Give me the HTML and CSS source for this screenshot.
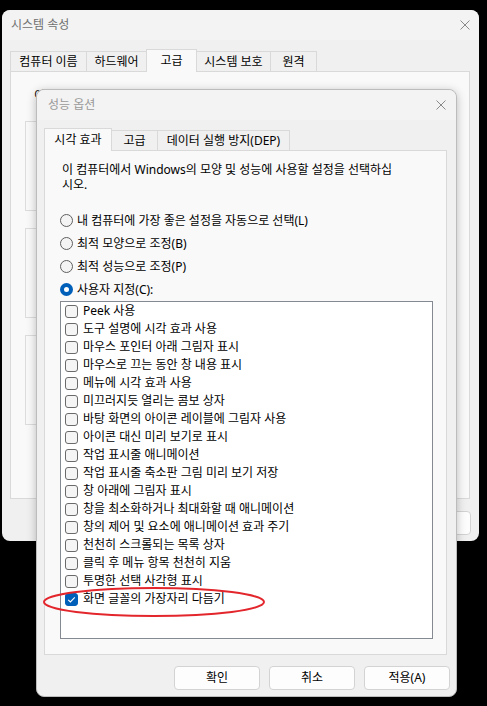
FILE: index.html
```html
<!DOCTYPE html>
<html lang="ko">
<head>
<meta charset="utf-8">
<title>성능 옵션</title>
<link rel="stylesheet" href="styles.css">
</head>
<body>
<div class="desktop">
  <section class="win win-back">
    <header class="titlebar back-title">
      <span class="title">시스템 속성</span>
      <svg class="close" width="10" height="10" viewBox="0 0 10 10"><path d="M0.5 0.5L9.5 9.5M9.5 0.5L0.5 9.5"/></svg>
    </header>
    <nav class="tabs back-tabs">
      <div class="tab bt1">컴퓨터 이름</div>
      <div class="tab bt2">하드웨어</div>
      <div class="tab sel bt3">고급</div>
      <div class="tab bt4">시스템 보호</div>
      <div class="tab bt5">원격</div>
    </nav>
    <div class="panel back-panel">
      <p class="admin-note">이</p>
      <div class="group"></div>
      <div class="group"></div>
      <div class="group"></div>
    </div>
    <div class="btnrow back-btns">
      <span class="btn bbtn"></span>
      <span class="btn bbtn"></span>
      <span class="btn bbtn"></span>
    </div>
  </section>

  <section class="win win-front">
    <header class="titlebar front-title">
      <span class="title">성능 옵션</span>
      <svg class="close" width="10" height="10" viewBox="0 0 10 10"><path d="M0.5 0.5L9.5 9.5M9.5 0.5L0.5 9.5"/></svg>
    </header>
    <nav class="tabs front-tabs">
      <div class="tab sel ft1">시각 효과</div>
      <div class="tab ft2">고급</div>
      <div class="tab ft3">데이터 실행 방지(DEP)</div>
    </nav>
    <div class="panel front-panel">
      <p class="desc">이 컴퓨터에서 Windows의 모양 및 성능에 사용할 설정을 선택하십<br>시오.</p>
      <div class="radios">
        <div class="radio-row"><span class="radio"></span><span>내 컴퓨터에 가장 좋은 설정을 자동으로 선택(L)</span></div>
        <div class="radio-row"><span class="radio"></span><span>최적 모양으로 조정(B)</span></div>
        <div class="radio-row"><span class="radio"></span><span>최적 성능으로 조정(P)</span></div>
        <div class="radio-row"><span class="radio on"></span><span>사용자 지정(C):</span></div>
      </div>
      <div class="listbox">
        <div class="item"><span class="cb"></span><span>Peek 사용</span></div>
        <div class="item"><span class="cb"></span><span>도구 설명에 시각 효과 사용</span></div>
        <div class="item"><span class="cb"></span><span>마우스 포인터 아래 그림자 표시</span></div>
        <div class="item"><span class="cb"></span><span>마우스로 끄는 동안 창 내용 표시</span></div>
        <div class="item"><span class="cb"></span><span>메뉴에 시각 효과 사용</span></div>
        <div class="item"><span class="cb"></span><span>미끄러지듯 열리는 콤보 상자</span></div>
        <div class="item"><span class="cb"></span><span>바탕 화면의 아이콘 레이블에 그림자 사용</span></div>
        <div class="item"><span class="cb"></span><span>아이콘 대신 미리 보기로 표시</span></div>
        <div class="item"><span class="cb"></span><span>작업 표시줄 애니메이션</span></div>
        <div class="item"><span class="cb"></span><span>작업 표시줄 축소판 그림 미리 보기 저장</span></div>
        <div class="item"><span class="cb"></span><span>창 아래에 그림자 표시</span></div>
        <div class="item"><span class="cb"></span><span>창을 최소화하거나 최대화할 때 애니메이션</span></div>
        <div class="item"><span class="cb"></span><span>창의 제어 및 요소에 애니메이션 효과 주기</span></div>
        <div class="item"><span class="cb"></span><span>천천히 스크롤되는 목록 상자</span></div>
        <div class="item"><span class="cb"></span><span>클릭 후 메뉴 항목 천천히 지움</span></div>
        <div class="item"><span class="cb"></span><span>투명한 선택 사각형 표시</span></div>
        <div class="item"><span class="cb on"><svg width="13" height="13" viewBox="0 0 13 13"><path d="M3.2 6.8L5.4 8.9L9.8 4.4"/></svg></span><span>화면 글꼴의 가장자리 다듬기</span></div>
      </div>
    </div>
    <div class="btnrow front-btns">
      <button class="btn fbtn">확인</button>
      <button class="btn fbtn">취소</button>
      <button class="btn fbtn">적용(A)</button>
    </div>
    <svg class="mark" width="222" height="30" viewBox="0 0 222 30"><ellipse cx="111" cy="15" rx="110" ry="14"/></svg>
  </section>
</div>
</body>
</html>
```
FILE: styles.css
```css
* { box-sizing: border-box; margin: 0; padding: 0; }
body {
  margin: 0;
  background: #000;
  font-family: "Noto Sans", "Noto Sans CJK KR", sans-serif;
  font-size: 12px;
  color: #000;
}
.desktop {
  position: relative;
  width: 487px;
  height: 706px;
  overflow: hidden;
  background: #000;
}
.win {
  position: absolute;
  display: flex;
  flex-direction: column;
  background: #f0f0f0;
  border-radius: 8px;
  overflow: hidden;
}
.win-back { left: 2px; top: 10px; width: 477px; height: 531px; }
.win-front {
  left: 36px; top: 89px; width: 421px; height: 608px;
  border: 1px solid #bcbcbc;
  box-shadow: 0 2px 10px rgba(0,0,0,.25);
  overflow: visible;
}
.titlebar {
  height: 30px;
  flex: none;
  display: flex;
  align-items: center;
  justify-content: space-between;
  background: #f3f3f3;
  border-radius: 8px 8px 0 0;
}
.back-title { padding: 0 9px 0 9px; }
.front-title { height: 30px; padding: 0 10px 0 11px; }
.title { line-height: 16px; }
.back-title .title { color: #707070; }
.front-title .title { color: #9a9a9a; }
.close path { stroke: #8a8a8a; stroke-width: 1; fill: none; }

.tabs {
  display: flex;
  align-items: flex-end;
  height: 22px;
  flex: none;
  position: relative;
  z-index: 1;
}
.back-tabs { margin: 9px 0 0 8px; }
.front-tabs { margin: 8px 0 0 7px; }
.tab {
  height: 20px;
  border: 1px solid #d9d9d9;
  border-bottom: none;
  border-right: none;
  background: #f0f0f0;
  text-align: center;
  line-height: 19px;
  white-space: nowrap;
}
.tab:last-child { border-right: 1px solid #d9d9d9; }
.tab.sel {
  height: 23px;
  margin-bottom: -1px;
  background: #f9f9f9;
  border-right: 1px solid #d9d9d9;
  line-height: 21px;
}
.tab.sel + .tab { border-left: none; }
.bt1 { width: 76px; }
.bt2 { width: 60px; }
.bt3 { width: 51px; }
.bt4 { width: 73px; }
.bt5 { width: 47px; }
.ft1 { width: 68px; }
.ft2 { width: 45px; }
.ft3 { width: 133px; }

.panel {
  background: #f9f9f9;
  border: 1px solid #d9d9d9;
  flex: none;
}
.back-panel {
  margin-left: 8px;
  width: 460px;
  height: 428px;
  padding: 16px 14px 0 14px;
  display: flex;
  flex-direction: column;
  gap: 17px;
}
.admin-note { line-height: 16px; margin-left: 9px; white-space: nowrap; }
.group {
  height: 90px;
  border: 1px solid #dcdcdc;
}
.btnrow {
  display: flex;
  justify-content: flex-end;
  gap: 9px;
  flex: none;
}
.back-btns { margin-top: 12px; padding-right: 8px; gap: 6px; }
.front-btns { margin-top: 11px; padding-right: 6px; }
.btn {
  display: block;
  height: 24px;
  background: #fdfdfd;
  border: 1px solid #d3d3d3;
  border-radius: 4px;
  font: inherit;
  color: #000;
  line-height: 20px;
}
.bbtn { width: 75px; }
.fbtn { width: 86px; }

.front-panel {
  margin-left: 7px;
  width: 403px;
  height: 505px;
  padding: 11px 0 0 15px;
}
.desc { line-height: 15px; margin-left: 2px; }
.radios { margin-top: 17px; }
.radio-row {
  height: 23px;
  display: flex;
  align-items: center;
  gap: 4px;
  line-height: 16px;
}
.radio {
  width: 13px; height: 13px;
  border-radius: 50%;
  border: 1px solid #5f5f5f;
  background: #f4f4f4;
  flex: none;
}
.radio.on {
  border: 4px solid #005fb8;
  background: #fff;
}
.listbox {
  width: 373px;
  height: 338px;
  border: 1px solid #858991;
  background: #fff;
  padding: 0 0 0 4px;
}
.item {
  height: 18px;
  display: flex;
  align-items: center;
  gap: 5px;
  line-height: 16px;
  white-space: nowrap;
}
.cb {
  width: 13px; height: 13px;
  flex: none;
  border: 1px solid #6a6a6a;
  border-radius: 3px;
  background: #f5f5f5;
}
.cb.on {
  background: #005fb8;
  border-color: #005fb8;
  position: relative;
}
.cb.on svg { position: absolute; left: -1px; top: -1px; }
.cb.on path { stroke: #fff; stroke-width: 1.1; fill: none; }
.mark {
  position: absolute;
  left: 6px;
  top: 497px;
  overflow: visible;
}
.mark ellipse { fill: none; stroke: #e3262c; stroke-width: 2; }
```
